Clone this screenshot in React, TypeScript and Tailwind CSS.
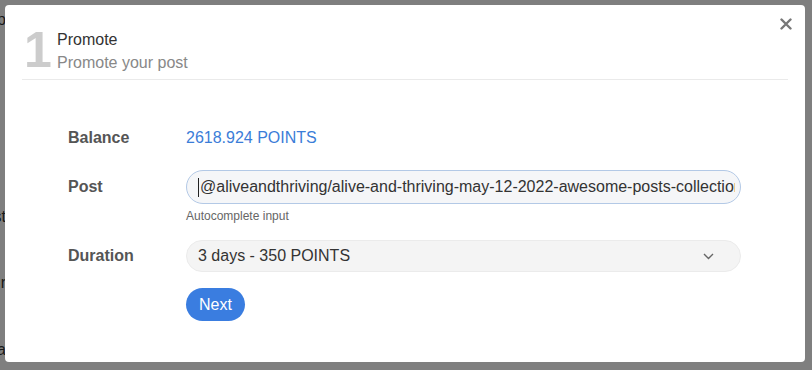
import React from "react";

const font = { fontFamily: '"Liberation Sans", Arial, sans-serif' };

function BgLine({ top, text }: { top: number; text: string }) {
  return (
    <div className="absolute left-0 w-[6px] flex justify-end whitespace-nowrap text-[16px] leading-[18px] text-[#333]" style={{ top }}>
      {text}
    </div>
  );
}

export default function App() {
  return (
    <div className="relative w-[812px] h-[370px] overflow-hidden bg-white" style={font}>
      {/* background page fragments */}
      <BgLine top={11} text="Stop" />
      <BgLine top={208} text="Post" />
      <BgLine top={274} text="Dur" />
      <BgLine top={341} text="Da" />
      {/* overlay */}
      <div className="absolute inset-0 bg-black/50" />
      {/* modal */}
      <div className="absolute left-[5px] top-[5px] w-[800px] h-[357px] bg-white rounded-[4px]">
        <svg className="absolute left-[775px] top-[13px] w-[12px] h-[12px]" viewBox="0 0 12 12">
          <path d="M1.5 1.5 L10.5 10.5 M10.5 1.5 L1.5 10.5" stroke="#777" strokeWidth="2.4" strokeLinecap="round" />
        </svg>
        <div className="mx-[17px] pt-[20px] pb-[4px] border-b border-[#eaeaea] flex items-start">
          <div className="pl-[2px] text-[50px] leading-[50px] font-bold text-[#cccccc] w-[35px]">1</div>
          <div className="mt-[3px] flex flex-col text-[16px] leading-[23px]">
            <span className="text-[#333]">Promote</span>
            <span className="text-[#888]">Promote your post</span>
          </div>
        </div>
        <div className="pl-[63px] pt-[41px] flex flex-col text-[16px]">
          <div className="flex items-center h-[34px]">
            <div className="w-[118px] font-bold text-[#555]">Balance</div>
            <div className="text-[#3b7dd8]">2618.924 POINTS</div>
          </div>
          <div className="flex items-center h-[34px] mt-[15px]">
            <div className="w-[118px] font-bold text-[#555]">Post</div>
            <div className="w-[555px] h-[34px] rounded-full bg-[#f5f6f8] border border-[#b3c9e6] pl-[11px] pr-[5px] flex items-center">
              <div className="flex-1 overflow-hidden whitespace-nowrap flex items-center text-[#333]">
                <span className="inline-block w-[1px] h-[19px] bg-[#222] mr-[1px] shrink-0" />
                <span>@aliveandthriving/alive-and-thriving-may-12-2022-awesome-posts-collection</span>
              </div>
            </div>
          </div>
          <div className="pl-[118px] mt-[4px] text-[12px] leading-[16px] text-[#666]">Autocomplete input</div>
          <div className="flex items-center h-[32px] mt-[16px]">
            <div className="w-[118px] font-bold text-[#555]">Duration</div>
            <div className="w-[555px] h-[32px] rounded-full bg-[#f4f4f4] border border-[#ebebeb] pl-[11px] pr-[26px] flex items-center justify-between text-[#333]">
              <span>3 days - 350 POINTS</span>
              <svg width="11" height="7" viewBox="0 0 11 7">
                <path d="M1 1 L5.5 5.5 L10 1" fill="none" stroke="#666" strokeWidth="1.4" />
              </svg>
            </div>
          </div>
          <div className="pl-[118px] mt-[16px]">
            <button className="h-[33px] px-[13px] rounded-full bg-[#3a7de0] text-white text-[16px]">Next</button>
          </div>
        </div>
      </div>
    </div>
  );
}
